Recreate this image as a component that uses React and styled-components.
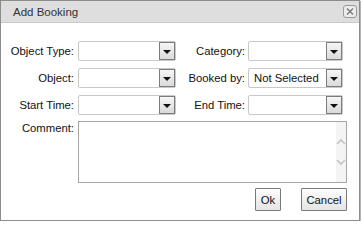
import React from "react"
import styled, { createGlobalStyle } from "styled-components"

const GlobalStyle = createGlobalStyle`
  body {
    margin: 0;
    background: #fff;
    font-family: "Liberation Sans", Arial, sans-serif;
    font-size: 11.3px;
  }
`

const Dialog = styled.div`
  width: 358px;
  height: 219px;
  border: 1px solid #8c8c8c;
  box-shadow: 1px 1px 0 #b5b5b5;
  background: #fff;
  display: flex;
  flex-direction: column;
`

const TitleBar = styled.div`
  height: 21px;
  background: #dedede;
  border-bottom: 1px solid #c9c9c9;
  display: flex;
  align-items: center;
  justify-content: space-between;
  padding: 0 2px 0 12px;
`

const Title = styled.span`
  color: #333;
  font-size: 11.5px;
`

const CloseButton = styled.div`
  width: 12px;
  height: 11px;
  border: 1px solid #9a9a9a;
  border-radius: 3px;
  background: #ececec;
  display: flex;
  align-items: center;
  justify-content: center;
`

const Body = styled.div`
  padding: 18px 12px 0 0;
  display: flex;
  flex-direction: column;
`

const FormGrid = styled.div`
  display: grid;
  grid-template-columns: 77px 98px 72px 95px;
  grid-auto-rows: 20px;
  row-gap: 7px;
`

const Label = styled.label`
  display: flex;
  align-items: ${p => (p.top ? "flex-start" : "center")};
  justify-content: flex-end;
  padding-right: ${p => p.pad || 4}px;
  padding-top: ${p => (p.top ? 1 : 0)}px;
  color: #111;
  white-space: nowrap;
`

const Select = styled.div`
  display: flex;
  align-items: stretch;
  border: 1px solid #c8c8c8;
  border-radius: 2px;
  background: #fff;
`

const SelectValue = styled.span`
  flex: 1;
  display: flex;
  align-items: center;
  padding-left: 5px;
  color: #111;
`

const DropButton = styled.span`
  width: 14px;
  border: 1px solid #7c7c7c;
  background: linear-gradient(#f6f6f6, #dadada);
  display: flex;
  align-items: center;
  justify-content: center;
  padding-top: 2px;
`

const Arrow = styled.span`
  width: 0;
  height: 0;
  border-left: 4px solid transparent;
  border-right: 4px solid transparent;
  border-top: 4px solid #111;
`

const CommentRow = styled.div`
  display: grid;
  grid-template-columns: 77px 269px;
  margin-top: 6px;
`

const CommentBox = styled.div`
  height: 60px;
  border: 1px solid #a6a6a6;
  display: flex;
`

const TextArea = styled.textarea`
  flex: 1;
  border: none;
  resize: none;
  outline: none;
  font-family: inherit;
  font-size: 11.3px;
`

const ScrollStrip = styled.div`
  width: 10px;
  background: #f4f4f4;
  display: flex;
  flex-direction: column;
  align-items: center;
  justify-content: center;
  gap: 14px;
`

const Footer = styled.div`
  display: flex;
  justify-content: flex-end;
  gap: 20px;
  margin-top: 5px;
`

const Button = styled.button`
  height: 23px;
  width: ${p => p.w}px;
  padding: 0;
  border: 1px solid #7a7a7a;
  border-radius: 1px;
  background: linear-gradient(#fdfdfd, #e4e4e4);
  font-family: inherit;
  font-size: 11.3px;
  color: #111;
`

const Chevron = ({ up }) => (
  <svg width="10" height="7" viewBox="0 0 10 7">
    <polyline
      points={up ? "1,6 5,2 9,6" : "1,1 5,5 9,1"}
      fill="none"
      stroke="#c4c4c4"
      strokeWidth="1.6"
    />
  </svg>
)

const Dropdown = ({ value }) => (
  <Select>
    <SelectValue>{value}</SelectValue>
    <DropButton><Arrow /></DropButton>
  </Select>
)

const App = () => {
  return (
    <>
      <GlobalStyle />
      <Dialog>
        <TitleBar>
          <Title>Add Booking</Title>
          <CloseButton>
            <svg width="8" height="7" viewBox="0 0 8 7">
              <path d="M1 0.5 L7 6.5 M7 0.5 L1 6.5" stroke="#777" strokeWidth="1.3" />
            </svg>
          </CloseButton>
        </TitleBar>
        <Body>
          <FormGrid>
            <Label>Object Type:</Label>
            <Dropdown />
            <Label pad={3}>Category:</Label>
            <Dropdown />

            <Label>Object:</Label>
            <Dropdown />
            <Label pad={3}>Booked by:</Label>
            <Dropdown value="Not Selected" />

            <Label>Start Time:</Label>
            <Dropdown />
            <Label pad={3}>End Time:</Label>
            <Dropdown />
          </FormGrid>
          <CommentRow>
            <Label top>Comment:</Label>
            <CommentBox>
              <TextArea />
              <ScrollStrip>
                <Chevron up />
                <Chevron />
              </ScrollStrip>
            </CommentBox>
          </CommentRow>
          <Footer>
            <Button w={26}>Ok</Button>
            <Button w={46}>Cancel</Button>
          </Footer>
        </Body>
      </Dialog>
    </>
  )
}

export default App
